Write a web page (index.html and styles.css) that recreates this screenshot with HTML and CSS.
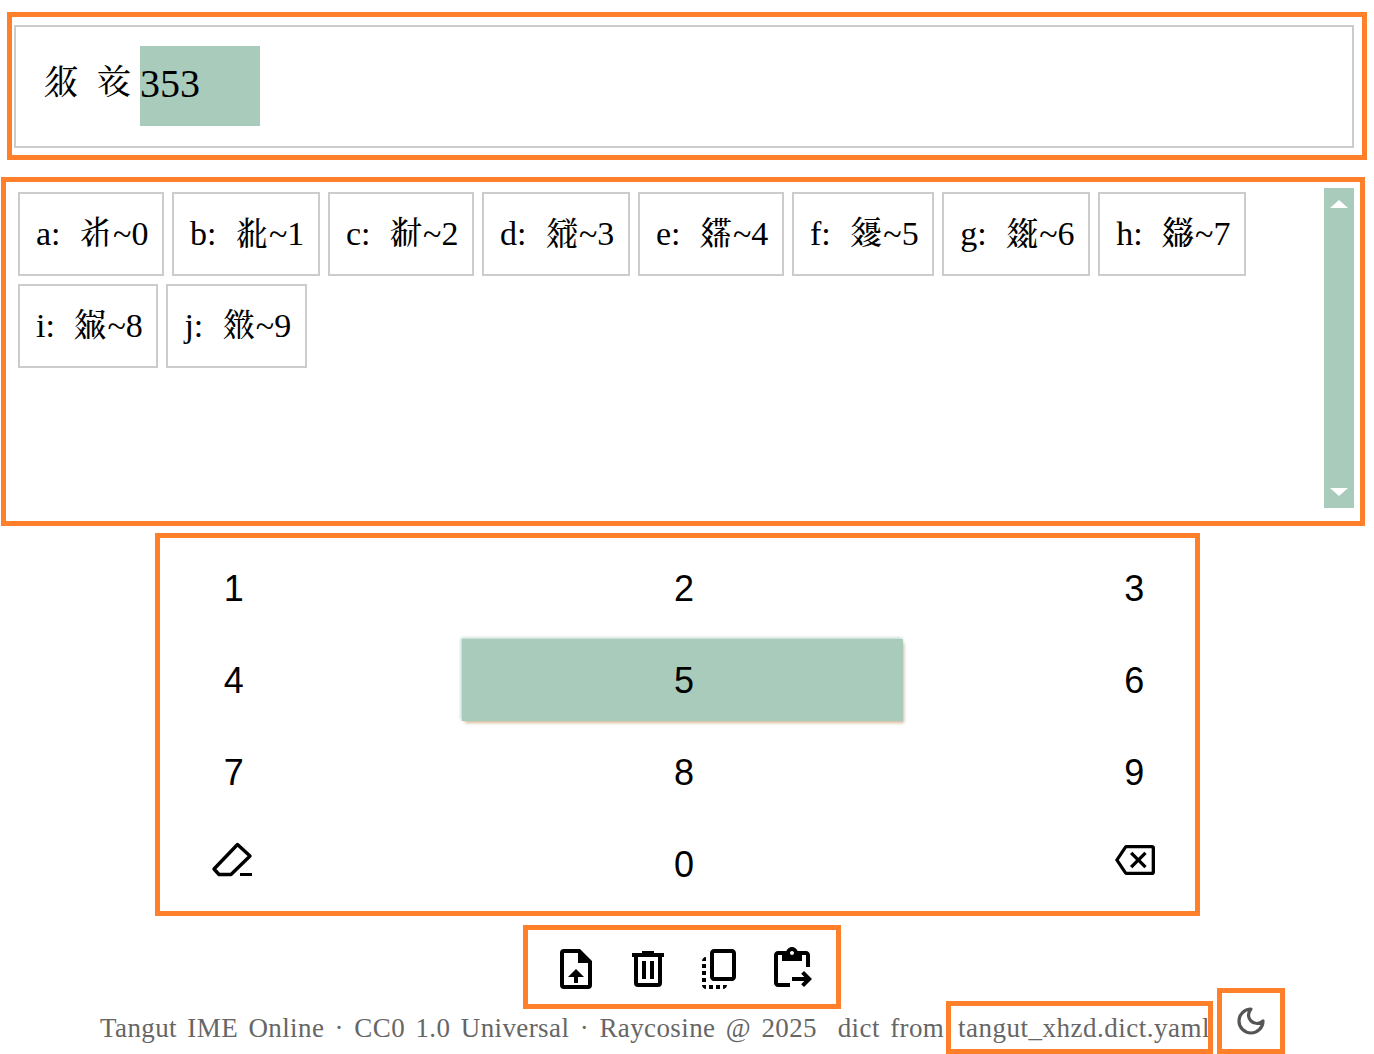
FILE: index.html
```html
<!DOCTYPE html>
<html lang="en">
<head>
<meta charset="utf-8">
<title>Tangut IME Online</title>
<link rel="stylesheet" href="styles.css">
</head>
<body>
<section class="frame input-frame">
  <div class="input-box"><span class="committed">𗼇 𘝞</span><span class="composing">353</span></div>
</section>
<section class="frame cand-frame">
  <ul class="cands">
    <li class="cand">a: 𘂆~0</li>
    <li class="cand">b: 𘂇~1</li>
    <li class="cand">c: 𘂈~2</li>
    <li class="cand">d: 𗿑~3</li>
    <li class="cand">e: 𗿒~4</li>
    <li class="cand">f: 𗿓~5</li>
    <li class="cand">g: 𗿔~6</li>
    <li class="cand">h: 𗿕~7</li>
    <li class="cand">i: 𗿖~8</li>
    <li class="cand">j: 𗿗~9</li>
  </ul>
  <div class="scrollbar">
    <svg class="arrow" viewBox="0 0 20 10"><path d="M10 1 19 9H1Z"/></svg>
    <svg class="arrow" viewBox="0 0 20 10"><path d="M10 9 19 1H1Z"/></svg>
  </div>
</section>
<section class="frame pad-frame">
  <div class="pad">
    <button class="key">1</button><button class="key">2</button><button class="key">3</button>
    <button class="key">4</button><button class="key key-active">5</button><button class="key">6</button>
    <button class="key">7</button><button class="key">8</button><button class="key">9</button>
    <button class="key key-icon"><svg class="icon icon-lg" viewBox="0 0 48 48"><path class="eraser" d="M29.5 8.5 42 20 23 38.5H11L6 33Z"/><path d="M32 37H44V40H32Z"/></svg></button>
    <button class="key">0</button>
    <button class="key key-icon"><svg class="icon icon-back" viewBox="0 0 24 24"><path d="M19,15.59L17.59,17L14,13.41L10.41,17L9,15.59L12.59,12L9,8.41L10.41,7L14,10.59L17.59,7L19,8.41L15.41,12L19,15.59M22,3A2,2 0 0,1 24,5V19A2,2 0 0,1 22,21H7C6.31,21 5.77,20.64 5.41,20.11L0,12L5.41,3.88C5.77,3.35 6.31,3 7,3H22M22,5H7L2.28,12L7,19H22V5Z"/></svg></button>
  </div>
</section>
<section class="frame tools-frame">
  <svg class="tool" viewBox="0 0 24 24"><path d="M14,2H6A2,2 0 0,0 4,4V20A2,2 0 0,0 6,22H18A2,2 0 0,0 20,20V8L14,2M18,20H6V4H13V9H18V20M12,12L8,16H11V19H13V16H16L12,12Z"/></svg>
  <svg class="tool" viewBox="0 0 24 24"><path d="M9,3V4H4V6H5V19A2,2 0 0,0 7,21H17A2,2 0 0,0 19,19V6H20V4H15V3H9M7,6H17V19H7V6M9,8V17H11V8H9M13,8V17H15V8H13Z"/></svg>
  <svg class="tool" viewBox="0 0 24 24"><path d="M18,2H9C7.9,2,7,2.9,7,4v12c0,1.1,0.9,2,2,2h9c1.1,0,2-0.9,2-2V4C20,2.9,19.1,2,18,2z M18,16H9V4h9V16z M3,15v-2h2v2H3z M3,9.5h2v2H3V9.5z M10,20h2v2h-2V20z M3,18.5v-2h2v2H3z M5,22c-1.1,0-2-0.9-2-2h2V22z M8.5,22h-2v-2h2V22z M13.5,22L13.5,22l0-2h2v0C15.5,21.1,14.6,22,13.5,22z M5,6L5,6l0,2h0H3v0C3,6.9,3.9,6,5,6z"/></svg>
  <svg class="tool" viewBox="0 0 24 24"><path d="M5,5h2v3h10V5h2v6h2V5c0-1.1-0.9-2-2-2h-4.18C14.4,1.84,13.3,1,12,1S9.6,1.84,9.18,3H5C3.9,3,3,3.9,3,5v14c0,1.1,0.9,2,2,2h6v-2H5V5z M12,3c0.55,0,1,0.45,1,1s-0.45,1-1,1s-1-0.45-1-1S11.45,3,12,3z"/><path d="M18.01,13l-1.42,1.41l1.58,1.58H12v2h6.17l-1.58,1.59l1.42,1.41l3.99-4L18.01,13z"/></svg>
</section>
<footer class="footer">
  <span class="credit">Tangut IME Online · CC0 1.0 Universal · Raycosine @ 2025 &nbsp;dict from</span>
  <a class="frame dict-link">tangut_xhzd.dict.yaml</a>
  <span class="frame theme"><svg class="moon" viewBox="0 0 24 24"><path d="M12 3a6 6 0 0 0 9 9 9 9 0 1 1-9-9Z"/></svg></span>
</footer>
</body>
</html>
```
FILE: styles.css
```css
html, body {
  margin: 0;
  height: 1054px;
  overflow: hidden;
  background: #fff;
}
body {
  font-family: "Liberation Serif", "Noto Sans CJK SC", serif;
  color: #000;
}
.frame {
  border: 5px solid #ff7f2a;
  box-sizing: border-box;
  display: block;
}
.input-frame {
  width: 1360px;
  height: 148px;
  margin: 12px 0 0 7px;
  padding: 8px 8px 7px 2px;
}
.input-box {
  box-sizing: border-box;
  height: 100%;
  border: 2px solid #ccc;
  padding: 19px 0 0 27px;
  line-height: 80px;
  white-space: pre;
  display: flex;
  align-items: flex-start;
}
.committed {
  font-size: 36px;
  word-spacing: 8px;
  line-height: 72px;
}
.composing {
  width: 120px;
  height: 80px;
  margin-left: 8px;
  background: #a9cbbc;
  font-size: 40px;
  line-height: 76px;
}
.cand-frame {
  width: 1364px;
  height: 349px;
  margin: 17px 0 0 1px;
  padding: 6px 6px 13px 12px;
  display: flex;
  justify-content: space-between;
}
.cands {
  list-style: none;
  margin: 0;
  padding: 4px 0 0;
  display: flex;
  flex-wrap: wrap;
  align-content: flex-start;
  gap: 8px;
  width: 1290px;
}
.cand {
  box-sizing: border-box;
  height: 84px;
  border: 2px solid #ccc;
  padding: 0 13.6px 0 16px;
  font-size: 34px;
  line-height: 80px;
  word-spacing: 10px;
}
.scrollbar {
  width: 30px;
  background: #a9cbbc;
  display: flex;
  flex-direction: column;
  justify-content: space-between;
  align-items: center;
  padding: 11px 0;
  box-sizing: border-box;
}
.arrow {
  width: 20px;
  height: 10px;
  fill: #fff;
}
.pad-frame {
  width: 1045px;
  height: 383px;
  margin: 7px 0 0 155px;
  padding-top: 9px;
}
.pad {
  width: 1341px;
  margin-left: -148px;
  display: grid;
  grid-template-columns: repeat(3, 1fr);
  grid-auto-rows: 82px;
  gap: 10px;
}
.key {
  border: 0;
  padding: 2px 0 0 3px;
  background: transparent;
  font-family: "Liberation Sans", sans-serif;
  font-size: 36px;
  color: #000;
  display: flex;
  align-items: center;
  justify-content: center;
}
.key-active {
  background: #a9cbbc;
  box-shadow: -1px -1px 3px rgba(169, 203, 188, .9), 2px 3px 3px -1px rgba(205, 170, 130, .8);
}
.key-icon {
  padding: 0 0 9px 3px;
}
.icon {
  width: 40px;
  height: 40px;
  display: block;
}
.icon-lg {
  width: 48px;
  height: 48px;
  margin-left: -3px;
}
.icon-back {
  margin-left: 2px;
}
.eraser {
  fill: none;
  stroke: #000;
  stroke-width: 3.4;
  stroke-linejoin: round;
}
.tools-frame {
  width: 318px;
  height: 84px;
  margin: 9px 0 0 523px;
  padding: 4px 0 0 4px;
  display: flex;
  justify-content: center;
  align-items: center;
  gap: 24px;
}
.tool {
  width: 48px;
  height: 48px;
  display: block;
}
.footer {
  margin: -21px 0 0;
  padding-left: 100px;
  height: 66px;
  display: flex;
  align-items: flex-end;
  color: #666;
  font-size: 27px;
  letter-spacing: .4px;
  word-spacing: 3.2px;
  white-space: nowrap;
}
.credit {
  width: 846px;
  flex-shrink: 0;
  line-height: 52px;
  padding-top: 1px;
}
.dict-link {
  width: 267px;
  height: 53px;
  flex-shrink: 0;
  padding-left: 7px;
  line-height: 44px;
  letter-spacing: .5px;
  overflow: hidden;
  word-spacing: 0;
}
.theme {
  width: 68px;
  height: 66px;
  margin-left: 4px;
  display: flex;
  align-items: center;
  justify-content: center;
}
.moon {
  width: 32px;
  height: 32px;
  fill: none;
  stroke: #555;
  stroke-width: 2.4;
  stroke-linecap: round;
  stroke-linejoin: round;
}
```
